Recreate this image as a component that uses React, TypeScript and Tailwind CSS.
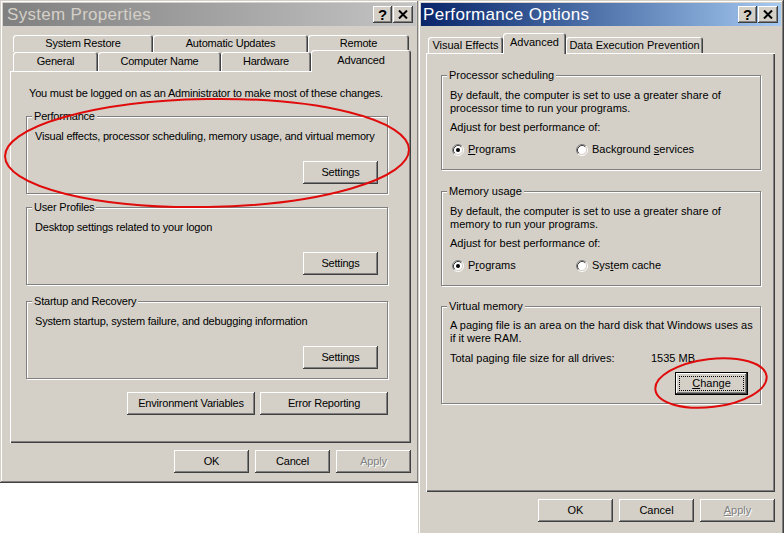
import React from "react";

const BTN3D =
  "shadow-[inset_-1px_-1px_0_#404040,inset_1px_1px_0_#ffffff,inset_-2px_-2px_0_#808080,inset_2px_2px_0_#d4d0c8]";

function Btn({
  children,
  cls = "w-[75px] h-[23px]",
  disabled = false,
}: {
  children: React.ReactNode;
  cls?: string;
  disabled?: boolean;
}) {
  return (
    <div
      className={`${cls} flex items-center justify-center bg-[#d4d0c8] ${BTN3D} ${
        disabled ? "text-[#808080] [text-shadow:1px_1px_0_#ffffff]" : "text-black"
      }`}
    >
      {children}
    </div>
  );
}

function DefaultBtn({ children }: { children: React.ReactNode }) {
  return (
    <div className="w-[73px] h-[23px] border border-black bg-[#d4d0c8]">
      <div className={`w-full h-full p-[3px] ${BTN3D}`}>
        <div className="w-full h-full border border-dotted border-black flex items-center justify-center">
          {children}
        </div>
      </div>
    </div>
  );
}

function U({ children }: { children: React.ReactNode }) {
  return <span className="underline underline-offset-[1px]">{children}</span>;
}

function Tab({
  label,
  cls,
  selected = false,
}: {
  label: string;
  cls: string;
  selected?: boolean;
}) {
  return (
    <div
      className={`${cls} flex items-center justify-center whitespace-nowrap rounded-t-[3px] bg-[#d4d0c8] shadow-[inset_1px_1px_0_#ffffff,inset_-1px_0_0_#404040,inset_-2px_0_0_#808080] ${
        selected ? "relative z-10 -mb-[1px] pb-[2px]" : ""
      }`}
    >
      {label}
    </div>
  );
}

function Group({
  label,
  cls,
  children,
}: {
  label: string;
  cls: string;
  children: React.ReactNode;
}) {
  return (
    <div
      className={`relative border border-[#808080] shadow-[inset_1px_1px_0_#ffffff,1px_1px_0_#ffffff] ${cls}`}
    >
      <div className="absolute -top-[7px] left-[5px] px-[2px] bg-[#d4d0c8] leading-[13px] whitespace-nowrap">
        {label}
      </div>
      {children}
    </div>
  );
}

function Radio({ checked }: { checked: boolean }) {
  return (
    <svg width="12" height="12" viewBox="0 0 12 12" className="shrink-0">
      <circle cx="6" cy="6" r="4.5" fill="#ffffff" />
      <path d="M2.11 9.89 A5.5 5.5 0 0 1 9.89 2.11" stroke="#808080" fill="none" />
      <path d="M9.89 2.11 A5.5 5.5 0 0 1 2.11 9.89" stroke="#ffffff" fill="none" />
      <path d="M2.82 9.18 A4.5 4.5 0 0 1 9.18 2.82" stroke="#404040" fill="none" />
      <path d="M9.18 2.82 A4.5 4.5 0 0 1 2.82 9.18" stroke="#d4d0c8" fill="none" />
      {checked && <circle cx="6" cy="6" r="2" fill="#000000" />}
    </svg>
  );
}

function CaptionButtons() {
  return (
    <div className="flex items-center gap-[1px] mr-[3px]">
      <div
        className={`w-[19px] h-[17px] flex items-center justify-center bg-[#d4d0c8] ${BTN3D} text-[15px] font-bold leading-none text-black`}
      >
        ?
      </div>
      <div
        className={`w-[20px] h-[17px] flex items-center justify-center bg-[#d4d0c8] ${BTN3D}`}
      >
        <svg width="10" height="9" viewBox="0 0 10 9">
          <path d="M1 0.5 L9 8.5 M9 0.5 L1 8.5" stroke="#000" strokeWidth="2" />
        </svg>
      </div>
    </div>
  );
}

const FRAME =
  "bg-[#d4d0c8] p-[3px] shadow-[inset_-1px_-1px_0_#404040,inset_1px_1px_0_#d4d0c8,inset_-2px_-2px_0_#808080,inset_2px_2px_0_#ffffff]";

const PANEL =
  "bg-[#d4d0c8] shadow-[inset_1px_1px_0_#ffffff,inset_-1px_-1px_0_#404040,inset_-2px_-2px_0_#808080]";

function LeftGroupBody({ text }: { text: string }) {
  return (
    <div className="pt-[13px] pl-[8px] pr-[9px] pb-[9px] flex flex-col">
      <div className="whitespace-nowrap">{text}</div>
      <div className="mt-[18px] flex justify-end">
        <Btn>Settings</Btn>
      </div>
    </div>
  );
}

function LeftWindow() {
  return (
    <div className={`w-[419px] h-[483px] shrink-0 flex flex-col ${FRAME}`}>
      <div className="h-[23px] flex items-center justify-between bg-linear-to-r from-[#808080] to-[#c4c4c4]">
        <span className="pl-[4px] text-[17px] tracking-[0.3px] leading-none text-[#d4d0c8]">
          System Properties
        </span>
        <CaptionButtons />
      </div>
      <div className="pl-[7px] pt-[9px] flex flex-col tracking-[-0.2px]">
        <div className="ml-[3px] flex h-[17px]">
          <Tab label="System Restore" cls="w-[140px] h-[17px]" />
          <Tab label="Automatic Updates" cls="w-[155px] h-[17px]" />
          <Tab label="Remote" cls="w-[101px] h-[17px]" />
        </div>
        <div className="ml-[3px] flex h-[19px] items-end">
          <Tab label="General" cls="w-[85px] h-[19px]" />
          <Tab label="Computer Name" cls="w-[123px] h-[19px]" />
          <Tab label="Hardware" cls="w-[90px] h-[19px]" />
          <Tab label="Advanced" cls="w-[100px] h-[22px]" selected />
        </div>
        <div className={`w-[401px] h-[372px] pt-[16px] pl-[16px] flex flex-col ${PANEL}`}>
          <div className="pl-[3px] whitespace-nowrap">
            You must be logged on as an Administrator to make most of these changes.
          </div>
          <Group label="Performance" cls="w-[362px] mt-[16px]">
            <LeftGroupBody text="Visual effects, processor scheduling, memory usage, and virtual memory" />
          </Group>
          <Group label="User Profiles" cls="w-[362px] mt-[13px]">
            <LeftGroupBody text="Desktop settings related to your logon" />
          </Group>
          <Group label="Startup and Recovery" cls="w-[362px] mt-[16px]">
            <LeftGroupBody text="System startup, system failure, and debugging information" />
          </Group>
          <div className="w-[362px] mt-[13px] flex justify-end gap-[5px]">
            <Btn cls="w-[128px] h-[23px]">Environment Variables</Btn>
            <Btn cls="w-[128px] h-[23px]">Error Reporting</Btn>
          </div>
        </div>
        <div className="w-[401px] mt-[7px] flex justify-end gap-[6px]">
          <Btn>OK</Btn>
          <Btn>Cancel</Btn>
          <Btn disabled>Apply</Btn>
        </div>
      </div>
    </div>
  );
}

function RightWindow() {
  return (
    <div className={`w-[366px] h-[545px] -ml-[1px] shrink-0 flex flex-col relative z-10 ${FRAME}`}>
      <div className="h-[23px] flex items-center justify-between bg-linear-to-r from-[#0a246a] to-[#a6caf0]">
        <span className="pl-[2px] text-[17px] tracking-[0.3px] leading-none text-white">
          Performance Options
        </span>
        <CaptionButtons />
      </div>
      <div className="pl-[5px] pt-[11px] flex flex-col">
        <div className="ml-[2px] flex h-[16px] items-end">
          <Tab label="Visual Effects" cls="w-[75px] h-[16px]" />
          <Tab label="Advanced" cls="w-[63px] h-[21px]" selected />
          <Tab label="Data Execution Prevention" cls="w-[137px] h-[16px]" />
        </div>
        <div className={`w-[349px] h-[439px] pt-[22px] pl-[15px] flex flex-col ${PANEL}`}>
          <Group label="Processor scheduling" cls="w-[320px]">
            <div className="pt-[13px] pl-[8px] pb-[13px] flex flex-col">
              <div className="whitespace-nowrap">
                By default, the computer is set to use a greater share of
                <br />
                processor time to run your programs.
              </div>
              <div className="mt-[6px]">Adjust for best performance of:</div>
              <div className="mt-[9px] ml-[2px] flex items-center h-[13px]">
                <div className="w-[124px] flex items-center gap-[4px]">
                  <Radio checked />
                  <span>
                    <U>P</U>rograms
                  </span>
                </div>
                <div className="flex items-center gap-[4px]">
                  <Radio checked={false} />
                  <span>
                    Background <U>s</U>ervices
                  </span>
                </div>
              </div>
            </div>
          </Group>
          <Group label="Memory usage" cls="w-[320px] mt-[21px]">
            <div className="pt-[13px] pl-[8px] pb-[13px] flex flex-col">
              <div className="whitespace-nowrap">
                By default, the computer is set to use a greater share of
                <br />
                memory to run your programs.
              </div>
              <div className="mt-[6px]">Adjust for best performance of:</div>
              <div className="mt-[9px] ml-[2px] flex items-center h-[13px]">
                <div className="w-[124px] flex items-center gap-[4px]">
                  <Radio checked />
                  <span>
                    P<U>r</U>ograms
                  </span>
                </div>
                <div className="flex items-center gap-[4px]">
                  <Radio checked={false} />
                  <span>
                    Sys<U>t</U>em cache
                  </span>
                </div>
              </div>
            </div>
          </Group>
          <Group label="Virtual memory" cls="w-[320px] mt-[20px]">
            <div className="pt-[12px] pl-[8px] pr-[12px] pb-[8px] flex flex-col">
              <div className="whitespace-nowrap">
                A paging file is an area on the hard disk that Windows uses as
                <br />
                if it were RAM.
              </div>
              <div className="mt-[7px] flex whitespace-nowrap">
                <span className="w-[201px]">Total paging file size for all drives:</span>
                <span>1535 MB</span>
              </div>
              <div className="mt-[7px] flex justify-end">
                <DefaultBtn>
                  <span>
                    <U>C</U>hange
                  </span>
                </DefaultBtn>
              </div>
            </div>
          </Group>
        </div>
        <div className="w-[349px] mt-[7px] flex justify-end gap-[6px]">
          <Btn>OK</Btn>
          <Btn>Cancel</Btn>
          <Btn disabled>
            <span>
              <U>A</U>pply
            </span>
          </Btn>
        </div>
      </div>
    </div>
  );
}

export default function App() {
  return (
    <div className="relative w-[784px] h-[533px] overflow-hidden bg-white flex items-start font-['Liberation_Sans',Arial,sans-serif] text-[11px] leading-[13px] text-black">
      <LeftWindow />
      <RightWindow />
      <svg
        className="absolute top-0 left-0 z-50 pointer-events-none"
        width="784"
        height="533"
        viewBox="0 0 784 533"
      >
        <ellipse
          cx="207"
          cy="153"
          rx="202"
          ry="54"
          transform="rotate(-1 207 153)"
          fill="none"
          stroke="#e00c0c"
          strokeWidth="2"
        />
        <ellipse
          cx="711"
          cy="383"
          rx="56"
          ry="24"
          transform="rotate(-7 711 383)"
          fill="none"
          stroke="#e00c0c"
          strokeWidth="2"
        />
      </svg>
    </div>
  );
}
